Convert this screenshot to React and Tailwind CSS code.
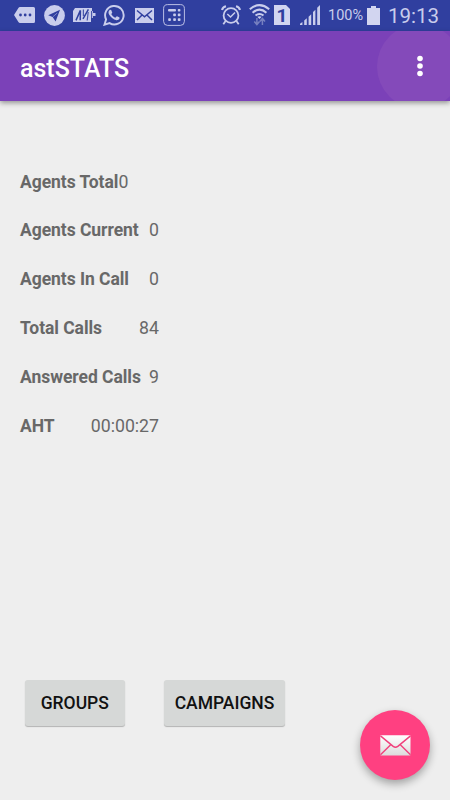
import { useState } from "react"

const stats = [
  { label: "Agents Total", value: "0", tight: true },
  { label: "Agents Current", value: "0" },
  { label: "Agents In Call", value: "0" },
  { label: "Total Calls", value: "84" },
  { label: "Answered Calls", value: "9" },
  { label: "AHT", value: "00:00:27" },
]

function MoreIcon() {
  return (
    <svg className="ml-[14px] h-[16px] w-[21px]" viewBox="0 0 21 16" fill="currentColor">
      <path d="M6 0H19.5Q21 0 21 1.5V14.5Q21 16 19.5 16H6Q5 16 4.4 15L0 8L4.4 1Q5 0 6 0Z" />
      <circle cx="6.5" cy="8" r="1.4" fill="#303f9f" />
      <circle cx="11.2" cy="8" r="1.4" fill="#303f9f" />
      <circle cx="16" cy="8" r="1.4" fill="#303f9f" />
    </svg>
  )
}

function TelegramIcon() {
  return (
    <svg className="ml-[9px] h-[21px] w-[21px]" viewBox="0 0 21 21">
      <circle cx="10.5" cy="10.5" r="10.4" fill="currentColor" />
      <path d="M16 4.8L4.2 10.2L8.6 11.9L11.6 16.6Z" fill="#303f9f" />
      <path d="M8.9 11.8L13.2 8" stroke="#8f98d0" strokeWidth=".8" />
    </svg>
  )
}

function MIcon() {
  return (
    <svg className="ml-[8px] h-[16px] w-[23px]" viewBox="0 0 23 16">
      <path d="M2 1H19V4H20V6H22.5V9H20V11H18V15H0V4Z" fill="currentColor" />
      <path d="M3 13.4L7.4 3.4L7.2 13.2M10 11.8L15.4 2.4" fill="none" stroke="#303f9f" strokeWidth="1.5" />
      <path d="M10.4 2.5V9M15.2 5L14.2 13.5M18.6 4V11" fill="none" stroke="#4a57ab" strokeWidth="1.2" />
    </svg>
  )
}

function WhatsAppIcon() {
  return (
    <svg className="ml-[7px] h-[22px] w-[22px]" viewBox="0 0 24 24" fill="currentColor">
      <path d="M17.472 14.382c-.297-.149-1.758-.867-2.03-.967-.273-.099-.471-.148-.67.15-.197.297-.767.966-.94 1.164-.173.199-.347.223-.644.075-.297-.15-1.255-.463-2.39-1.475-.883-.788-1.48-1.761-1.653-2.059-.173-.297-.018-.458.13-.606.134-.133.298-.347.446-.52.149-.174.198-.298.298-.497.099-.198.05-.371-.025-.52-.075-.149-.669-1.612-.916-2.207-.242-.579-.487-.5-.669-.51-.173-.008-.371-.01-.57-.01-.198 0-.52.074-.792.372-.272.297-1.04 1.016-1.04 2.479 0 1.462 1.065 2.875 1.213 3.074.149.198 2.096 3.2 5.077 4.487.709.306 1.262.489 1.694.625.712.227 1.36.195 1.871.118.571-.085 1.758-.719 2.006-1.413.248-.694.248-1.289.173-1.413-.074-.124-.272-.198-.57-.347" />
      <path d="M1.6 22.6L3.4 16.8A10.1 10.1 0 1 1 7.2 20.9Z" fill="none" stroke="currentColor" strokeWidth="2.1" />
    </svg>
  )
}

function SmallMailIcon() {
  return (
    <svg className="ml-[10px] h-[15px] w-[19px]" viewBox="0 0 19 15">
      <path d="M0 0H19V15H0Z" fill="currentColor" />
      <path d="M2 2.5L9.5 8.8L17 2.5M2 12L6.8 7.3M17 12L12.2 7.3" fill="none" stroke="#303f9f" strokeWidth="1.5" />
    </svg>
  )
}

function DialIcon() {
  return (
    <svg className="ml-[9px] h-[22px] w-[22px]" viewBox="0 0 22 22" fill="currentColor">
      <rect x=".6" y=".6" width="20.8" height="20.8" rx="4" fill="none" stroke="currentColor" strokeWidth=".9" />
      <rect x="5" y="5" width="8" height="2.4" rx="1" />
      <rect x="14.8" y="5" width="2.6" height="2.6" rx=".8" />
      <rect x="10.2" y="9.6" width="2.7" height="2.7" rx=".8" />
      <rect x="14.8" y="9.6" width="2.7" height="2.7" rx=".8" />
      <rect x="5.2" y="14.3" width="2.7" height="2.7" rx=".8" />
      <rect x="10.2" y="14.3" width="2.7" height="2.7" rx=".8" />
      <rect x="14.8" y="14.3" width="2.7" height="2.7" rx=".8" />
    </svg>
  )
}

function AlarmIcon() {
  return (
    <svg className="ml-[36px] h-[20px] w-[20px]" viewBox="0 0 20 20" fill="none" stroke="currentColor">
      <circle cx="10" cy="10.5" r="7.4" strokeWidth="1.8" />
      <path d="M6.3 9L9.5 12L14 7.5" strokeWidth="1.5" />
      <path d="M1 5Q1.8 2 5 1.3M19 5Q18.2 2 15 1.3" strokeWidth="2.1" />
      <path d="M4.6 16L2.3 19.2M15.4 16L17.7 19.2" strokeWidth="1.8" />
    </svg>
  )
}

function WifiIcon() {
  return (
    <svg className="ml-[8px] h-[22px] w-[21px]" viewBox="0 0 21 22" fill="none" stroke="currentColor">
      <path d="M.8 5.2Q10.5 -2.8 20.2 5.2" strokeWidth="2.1" />
      <path d="M3.6 8.7Q10.5 2.7 17.4 8.7" strokeWidth="2.1" />
      <path d="M6.5 11.6Q10.5 8.3 14.5 11.6" strokeWidth="2" />
      <path d="M8.3 12.8Q10.5 11.5 12.7 12.8L10.5 14.9Z" fill="currentColor" stroke="none" />
      <path d="M7.9 14V20M5.3 17.6L7.9 20.6L10.5 17.6M13.4 21V15M10.8 17.4L13.4 14.4L16 17.4" stroke="#7780c0" strokeWidth="1.5" />
    </svg>
  )
}

function SignalIcon() {
  return (
    <svg className="ml-[10px] h-[20px] w-[20px]" viewBox="0 0 20 20" fill="currentColor">
      <path d="M0 20V18.8L2.4 17V20ZM4.2 20V15.5L6.8 13.2V20ZM8.6 20V11.7L11.2 9.2V20ZM13 20V7L15.4 4.8V20ZM17.2 20V2.8L20 0V20Z" />
    </svg>
  )
}

function StatusBar() {
  return (
    <div className="flex h-[31px] items-center bg-[#303f9f] pb-px text-[#c9cdec] whitespace-nowrap [&>svg]:shrink-0">
      <MoreIcon />
      <TelegramIcon />
      <MIcon />
      <WhatsAppIcon />
      <SmallMailIcon />
      <DialIcon />
      <AlarmIcon />
      <WifiIcon />
      <span className="ml-[4px] flex h-5 w-4 shrink-0 items-center justify-center bg-[#d2d5f0] text-[19px] leading-none font-bold text-[#303f9f] [clip-path:polygon(0_0,75%_0,100%_20%,100%_100%,0_100%)]">1</span>
      <SignalIcon />
      <span className="ml-[8px] w-[35px] pt-[3px] text-[14.5px] leading-none">100%</span>
      <svg className="ml-[4px] h-[19px] w-[13px]" viewBox="0 0 13 19" fill="#d2d5f0">
        <path d="M4 0H9V2H13V19H0V2H4Z" />
      </svg>
      <span className="ml-[8px] pt-[2px] text-[20.5px] leading-none">19:13</span>
    </div>
  )
}

function Toolbar({ onMenu }) {
  return (
    <header className="relative z-10 flex h-[70px] items-center justify-between bg-[#7b41b8] pl-5 shadow-[0_2px_5px_rgba(0,0,0,0.38)]">
      <h1 className="pt-[4px] text-[25px] leading-none font-medium text-white">astSTATS</h1>
      <div className="flex h-full w-[73px] items-center overflow-hidden">
        <button onClick={onMenu} className="flex h-[85px] w-[85px] shrink-0 cursor-pointer items-center justify-center rounded-full bg-[#844aba]">
          <svg className="h-[22px] w-[6px]" viewBox="0 0 6 22" fill="white">
            <circle cx="3" cy="3.5" r="2.8" />
            <circle cx="3" cy="11" r="2.8" />
            <circle cx="3" cy="18.5" r="2.8" />
          </svg>
        </button>
      </div>
    </header>
  )
}

function MailIcon() {
  return (
    <svg className="h-[21px] w-[31px]" viewBox="0 0 31 21">
      <defs>
        <linearGradient id="mail" x1="0" y1="0" x2="0" y2="1">
          <stop offset="0" stopColor="#ffffff" />
          <stop offset="1" stopColor="#dcdcdc" />
        </linearGradient>
      </defs>
      <rect x=".3" y=".3" width="30.2" height="20.2" rx=".8" fill="url(#mail)" />
      <path d="M.5 .9L13.2 11.4Q15.5 13.2 17.8 11.4L30.5 .9M.5 19.8L10.7 9.8M30.5 19.8L20.3 9.8" fill="none" stroke="#f0407c" strokeWidth="1.4" />
    </svg>
  )
}

export default function App() {
  const [menuOpen, setMenuOpen] = useState(false)

  return (
    <div className="relative flex h-[800px] w-[450px] flex-col overflow-hidden bg-[#eeeeee] font-[Roboto,sans-serif]">
      <StatusBar />
      <Toolbar onMenu={() => setMenuOpen(!menuOpen)} />

      <main className="flex flex-1 flex-col justify-between pt-[56.4px] pb-[74.5px]">
        <div className="ml-5 w-[139px] text-[17.5px] text-[#686868]">
          {stats.map(stat => (
            <div key={stat.label} className={`flex h-[48.8px] items-center whitespace-nowrap ${stat.tight ? "" : "justify-between"}`}>
              <span className="font-bold tracking-[-0.05px]">{stat.label}</span>
              <span className="text-[17.7px]">{stat.value}</span>
            </div>
          ))}
        </div>

        <div className="flex gap-[39px] pl-[24.5px] text-[17.5px] font-medium text-[#111111]">
          <button className="h-[45.5px] w-[100.5px] cursor-pointer rounded-[3px] bg-[#d6d8d7] pt-px shadow-[0_1px_1px_rgba(0,0,0,0.25)]">GROUPS</button>
          <button className="h-[45.5px] w-[121px] cursor-pointer rounded-[3px] bg-[#d6d8d7] pt-px shadow-[0_1px_1px_rgba(0,0,0,0.25)]">CAMPAIGNS</button>
        </div>
      </main>

      <button className="absolute right-5 bottom-5 flex h-[70px] w-[70px] cursor-pointer items-center justify-center rounded-full bg-[#ff4081] shadow-[0_4px_8px_rgba(0,0,0,0.32)]">
        <MailIcon />
      </button>
    </div>
  )
}
